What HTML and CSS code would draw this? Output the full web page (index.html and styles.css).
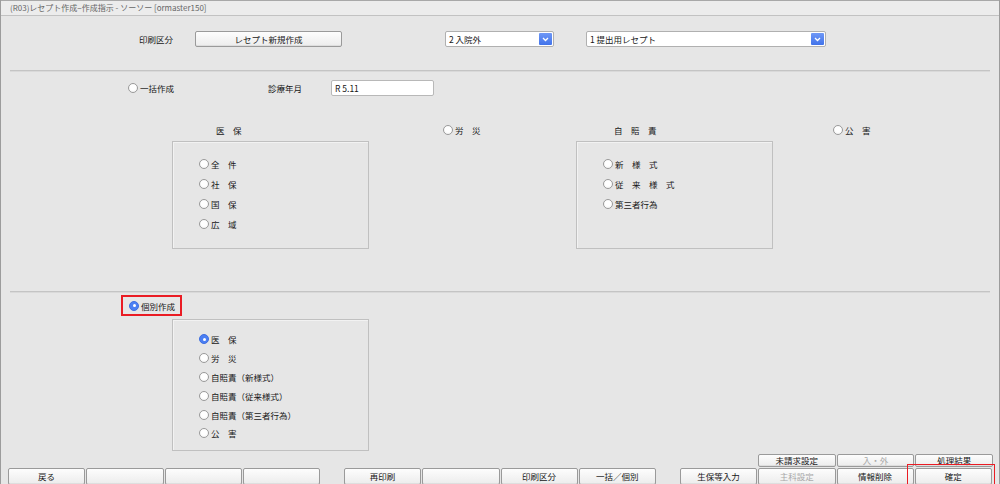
FILE: index.html
```html
<!DOCTYPE html>
<html lang="ja">
<head>
<meta charset="utf-8">
<title>レセプト作成</title>
<link rel="stylesheet" href="styles.css">
</head>
<body>
<div class="window">
  <div class="titlebar">(R03)レセプト作成−作成指示 - ソーソー [ormaster150]</div>

  <div class="row row-top">
    <span class="lbl lbl-kubun">印刷区分</span>
    <button class="btn btn-new">レセプト新規作成</button>
    <div class="select sel-1"><span class="sel-text">2 入院外</span><span class="sel-arrow"><svg width="7" height="5" viewBox="0 0 7 5"><path d="M1 1 L3.5 3.5 L6 1" fill="none" stroke="#fff" stroke-width="1.3"/></svg></span></div>
    <div class="select sel-2"><span class="sel-text">1 提出用レセプト</span><span class="sel-arrow"><svg width="7" height="5" viewBox="0 0 7 5"><path d="M1 1 L3.5 3.5 L6 1" fill="none" stroke="#fff" stroke-width="1.3"/></svg></span></div>
  </div>

  <div class="sep sep-1"></div>

  <div class="row row-ikkatsu">
    <label class="radio-item ri-ikkatsu"><span class="radio"></span>一括作成</label>
    <span class="lbl lbl-ym">診療年月</span>
    <div class="input input-ym">R 5.11</div>
  </div>

  <div class="row row-heads">
    <span class="head head-iho">医　保</span>
    <label class="radio-item head-rousai"><span class="radio"></span>労　災</label>
    <span class="head head-jibai">自　賠　責</span>
    <label class="radio-item head-kougai"><span class="radio"></span>公　害</label>
  </div>

  <div class="row row-boxes">
    <div class="box box-iho">
      <label class="radio-item"><span class="radio"></span>全　件</label>
      <label class="radio-item"><span class="radio"></span>社　保</label>
      <label class="radio-item"><span class="radio"></span>国　保</label>
      <label class="radio-item"><span class="radio"></span>広　域</label>
    </div>
    <div class="box box-jibai">
      <label class="radio-item"><span class="radio"></span>新　様　式</label>
      <label class="radio-item"><span class="radio"></span>従　来　様　式</label>
      <label class="radio-item"><span class="radio"></span>第三者行為</label>
    </div>
  </div>

  <div class="sep sep-2"></div>

  <div class="row row-kobetsu">
    <div class="kobetsu-frame">
      <label class="radio-item"><span class="radio checked"></span>個別作成</label>
    </div>
  </div>

  <div class="row row-box3">
    <div class="box box-kobetsu">
      <label class="radio-item"><span class="radio checked"></span>医　保</label>
      <label class="radio-item"><span class="radio"></span>労　災</label>
      <label class="radio-item"><span class="radio"></span>自賠責（新様式）</label>
      <label class="radio-item"><span class="radio"></span>自賠責（従来様式）</label>
      <label class="radio-item"><span class="radio"></span>自賠責（第三者行為）</label>
      <label class="radio-item"><span class="radio"></span>公　害</label>
    </div>
  </div>

  <div class="fkeys">
    <div class="fkey-row fkey-upper">
      <div class="group group-3up">
        <button class="btn fkey">未請求設定</button>
        <button class="btn fkey disabled">入・外</button>
        <button class="btn fkey">処理結果</button>
      </div>
    </div>
    <div class="fkey-row fkey-lower">
      <div class="group">
        <button class="btn fkey">戻る</button>
        <button class="btn fkey"></button>
        <button class="btn fkey"></button>
        <button class="btn fkey"></button>
      </div>
      <div class="group">
        <button class="btn fkey">再印刷</button>
        <button class="btn fkey"></button>
        <button class="btn fkey">印刷区分</button>
        <button class="btn fkey">一括／個別</button>
      </div>
      <div class="group">
        <button class="btn fkey">生保等入力</button>
        <button class="btn fkey disabled">主科設定</button>
        <button class="btn fkey">情報削除</button>
        <div class="highlight"><button class="btn fkey">確定</button></div>
      </div>
    </div>
  </div>
</div>
</body>
</html>
```

FILE: styles.css
```css
* { box-sizing: border-box; }

html, body {
  margin: 0;
  padding: 0;
  width: 1000px;
  height: 484px;
  overflow: hidden;
  background: #e6e6e6;
}

body {
  font-family: "Noto Sans CJK JP", "Noto Sans", sans-serif;
  font-size: 8.5px;
  color: #161616;
}

.window {
  width: 1000px;
  height: 484px;
  border-left: 1px solid #9c9c9c;
  border-right: 1px solid #9c9c9c;
  background: #e6e6e6;
  overflow: hidden;
}

.titlebar {
  height: 16px;
  line-height: 14px;
  padding-left: 9px;
  font-size: 8px;
  color: #666;
  background: #ececec;
  border-top: 1px solid #a8a8a8;
  border-bottom: 1px solid #c2c2c2;
}

.row {
  display: flex;
  align-items: center;
}

.lbl { white-space: nowrap; }

/* top row */
.row-top {
  margin-top: 15px;
  height: 16px;
  padding-left: 138px;
}
.lbl-kubun { width: 56px; }

.btn {
  font-family: inherit;
  font-size: 8.5px;
  color: #161616;
  background: linear-gradient(#fdfdfd, #ececec);
  border: 1px solid #9a9a9a;
  border-radius: 2px;
  padding: 0;
  margin: 0;
  box-shadow: inset 0 -1px 0 #dedede;
}

.btn-new {
  width: 147px;
  height: 16px;
}

.select {
  display: flex;
  align-items: stretch;
  height: 16px;
  background: #fff;
  border: 1px solid #b0b0b0;
  border-radius: 2px;
}
.sel-text {
  flex: 1;
  padding-left: 3px;
  line-height: 14px;
}
.sel-arrow {
  width: 13px;
  margin: 1px;
  border-radius: 1px;
  background: linear-gradient(#6f98f6, #4173ea);
  display: flex;
  align-items: center;
  justify-content: center;
}
.sel-1 { width: 109px; margin-left: 103px; }
.sel-2 { width: 240px; margin-left: 32px; }

.sep {
  margin: 0 9px;
  height: 2px;
  border-top: 1px solid #c4c4c4;
  border-bottom: 1px solid #d9d9d9;
}
.sep-1 { margin-top: 23px; }
.sep-2 { margin-top: 42px; }

/* radios */
.radio-item {
  display: flex;
  align-items: center;
  white-space: nowrap;
}
.radio {
  width: 10px;
  height: 10px;
  border-radius: 50%;
  border: 1px solid #9a9a9a;
  background: radial-gradient(circle at 50% 40%, #ffffff 40%, #f0f0f0 100%);
  margin-right: 2px;
  flex: none;
  position: relative;
}
.radio.checked {
  border-color: #3f6fe0;
  background: #4b7ff3;
}
.radio.checked::after {
  content: "";
  position: absolute;
  left: 2.5px;
  top: 2.5px;
  width: 3px;
  height: 3px;
  border-radius: 50%;
  background: #fff;
}

/* row 2 */
.row-ikkatsu {
  margin-top: 8px;
  height: 16px;
  padding-left: 127px;
}
.ri-ikkatsu { width: 140px; }
.lbl-ym { width: 63px; }
.input {
  width: 103px;
  height: 16px;
  line-height: 14px;
  padding-left: 3px;
  background: #fff;
  border: 1px solid #b8b8b8;
  border-radius: 2px;
}

/* headers */
.row-heads {
  margin-top: 27px;
  height: 13px;
  padding-left: 215px;
}
.head-iho { width: 227px; }
.head-rousai { width: 171px; }
.head-jibai { width: 219px; }

/* boxes */
.row-boxes {
  margin-top: 5px;
  align-items: flex-start;
  padding-left: 171px;
}
.box {
  width: 197px;
  border: 1px solid #c0c0c0;
  box-shadow: inset 1px 1px 0 #f2f2f2;
  display: flex;
  flex-direction: column;
  padding-left: 26px;
}
.box-iho, .box-jibai {
  height: 108px;
  padding-top: 12px;
}
.box-iho .radio-item, .box-jibai .radio-item { height: 20px; }
.box-jibai { margin-left: 207px; }

/* kobetsu */
.row-kobetsu {
  margin-top: 2px;
  padding-left: 120px;
  height: 21px;
}
.kobetsu-frame {
  width: 61px;
  height: 21px;
  border: 2px solid #ea1c24;
  padding-left: 6px;
  display: flex;
  align-items: center;
}
.row-box3 {
  margin-top: 3px;
  padding-left: 171px;
}
.box-kobetsu {
  height: 132px;
  padding-top: 10px;
}
.box-kobetsu .radio-item { height: 18.8px; }

/* function keys */
.fkeys {
  margin-top: 3px;
}
.fkey-row {
  display: flex;
  padding-left: 7px;
  gap: 24px;
}
.fkey-upper {
  height: 13px;
  justify-content: flex-end;
  padding-right: 6px;
}
.fkey-lower {
  margin-top: 1px;
  height: 17px;
}
.group {
  width: 312px;
  display: grid;
  grid-template-columns: repeat(4, 1fr);
  gap: 1px;
}
.group-3up {
  width: 235px;
  grid-template-columns: repeat(3, 1fr);
}
.fkey {
  height: 100%;
  width: 100%;
  line-height: 1;
}
.fkey.disabled { color: #a8a8a8; }
.highlight {
  position: relative;
  height: 100%;
}
.highlight::after {
  content: "";
  position: absolute;
  left: -8px;
  right: -3px;
  top: -4px;
  bottom: -2px;
  border: 1.5px solid #ea1c24;
  pointer-events: none;
}
```
